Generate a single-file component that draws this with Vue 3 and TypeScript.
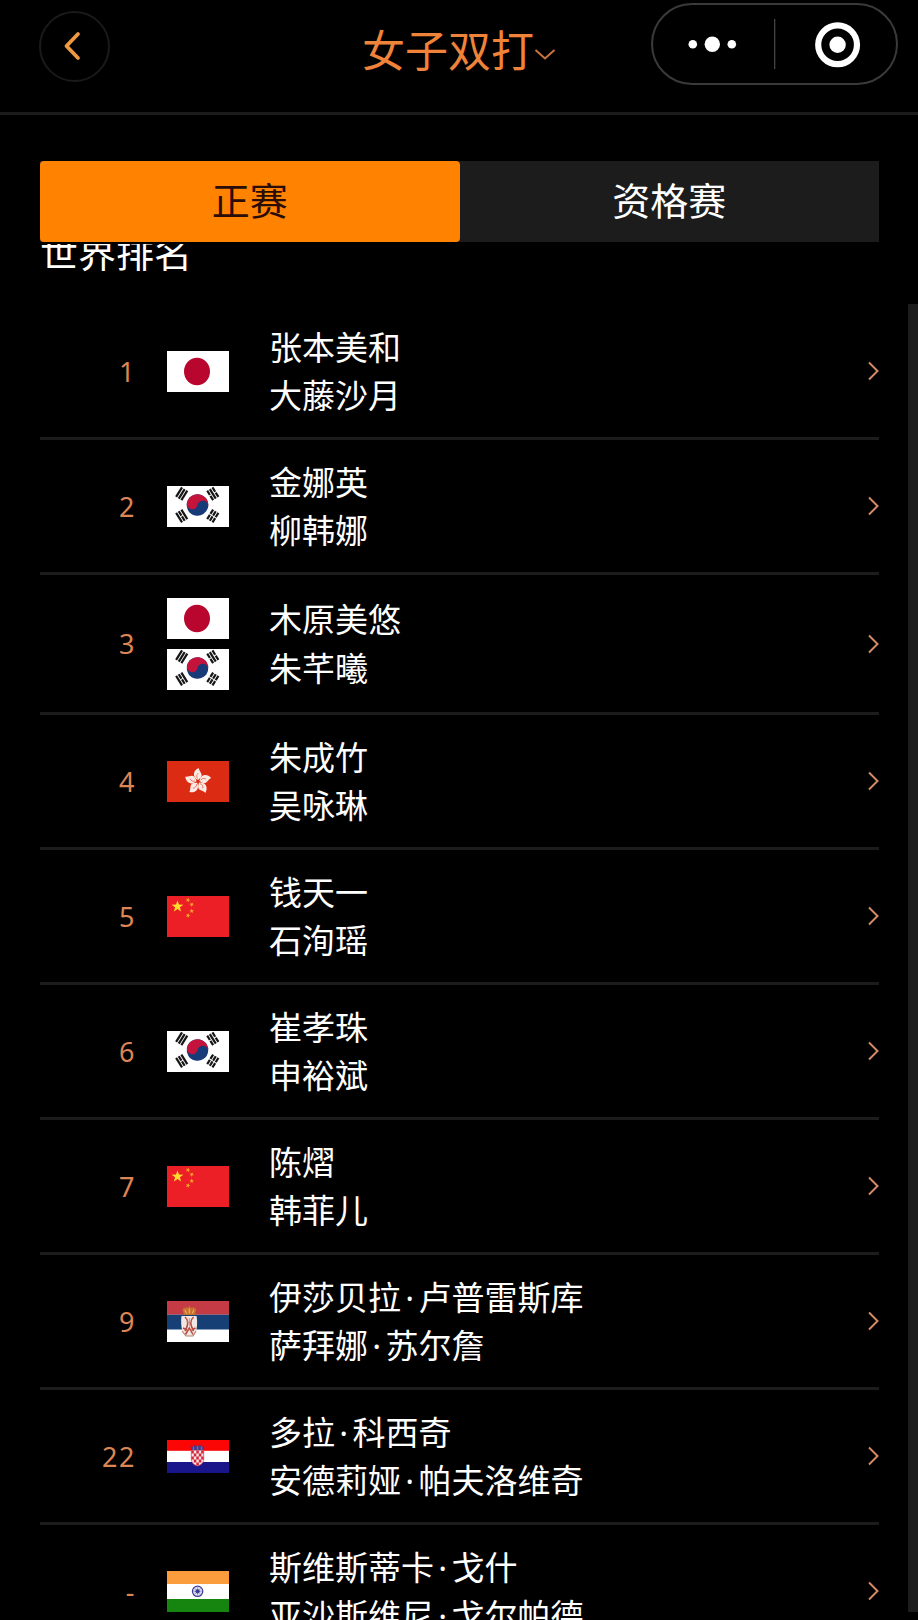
<script setup lang="ts">
type FlagCode = 'jp' | 'kr' | 'hk' | 'cn' | 'rs' | 'hr' | 'in'

interface Pair {
  rank: string
  flags: FlagCode[]
  players: string[]
}

const pairs: Pair[] = [
  { rank: '1', flags: ['jp'], players: ['张本美和', '大藤沙月'] },
  { rank: '2', flags: ['kr'], players: ['金娜英', '柳韩娜'] },
  { rank: '3', flags: ['jp', 'kr'], players: ['木原美悠', '朱芊曦'] },
  { rank: '4', flags: ['hk'], players: ['朱成竹', '吴咏琳'] },
  { rank: '5', flags: ['cn'], players: ['钱天一', '石洵瑶'] },
  { rank: '6', flags: ['kr'], players: ['崔孝珠', '申裕斌'] },
  { rank: '7', flags: ['cn'], players: ['陈熠', '韩菲儿'] },
  { rank: '9', flags: ['rs'], players: ['伊莎贝拉·卢普雷斯库', '萨拜娜·苏尔詹'] },
  { rank: '22', flags: ['hr'], players: ['多拉·科西奇', '安德莉娅·帕夫洛维奇'] },
  { rank: '-', flags: ['in'], players: ['斯维斯蒂卡·戈什', '亚沙斯维尼·戈尔帕德'] },
]

const nameParts = (name: string): string[] => name.split(/(·)/)

const star = (cx: number, cy: number, r: number, turn = 0): string =>
  Array.from({ length: 10 }, (_, i) => {
    const radius = i % 2 ? r * 0.4 : r
    const a = ((i * 36 - 90 + turn) * Math.PI) / 180
    return `${(cx + radius * Math.cos(a)).toFixed(2)},${(cy + radius * Math.sin(a)).toFixed(2)}`
  }).join(' ')

const smallStars = [
  star(21, 4, 2.5, 20),
  star(24.7, 8.5, 2.5, 40),
  star(24.7, 15, 2.5, 0),
  star(21, 19.5, 2.5, 20),
]

// Position, rotation and broken bars of the four trigrams
const trigrams = [
  { x: 14.7, y: 7.8, turn: -58, split: [false, false, false] },
  { x: 45.8, y: 7.8, turn: 58, split: [true, false, true] },
  { x: 14.7, y: 30, turn: 58, split: [false, true, false] },
  { x: 45.8, y: 30, turn: -58, split: [true, true, true] },
]
</script>

<template>
  <div class="page">
    <header class="topbar">
      <button class="back" aria-label="返回">
        <svg width="71" height="71" viewBox="0 0 71 71">
          <path d="M39 23 L27.5 35 L39 47" fill="none" stroke="#ef9a40" stroke-width="3.8" stroke-linecap="round" stroke-linejoin="round" />
        </svg>
      </button>
      <div class="title">
        <span>女子双打</span>
        <svg class="caret" width="22" height="13" viewBox="0 0 22 13">
          <path d="M1.5 2 L11 10.5 L20.5 2" fill="none" stroke="#c9743c" stroke-width="2" />
        </svg>
      </div>
      <div class="capsule">
        <svg width="247" height="82" viewBox="0 0 247 82">
          <rect x="1" y="1" width="245" height="80" rx="40" fill="none" stroke="#3a3a3a" stroke-width="2" />
          <g fill="#fff">
            <circle cx="41.8" cy="41.3" r="4.3" />
            <circle cx="61.3" cy="41.3" r="7.7" />
            <circle cx="80.8" cy="41.3" r="4.3" />
            <circle cx="186.6" cy="41.8" r="8.2" />
          </g>
          <rect x="123" y="16" width="1.3" height="50" fill="#444" />
          <circle cx="186.6" cy="41.8" r="19.4" fill="none" stroke="#fff" stroke-width="6.2" />
        </svg>
      </div>
    </header>

    <nav class="tabs">
      <div class="tab active"><span>正赛</span></div>
      <div class="tab"><span>资格赛</span></div>
    </nav>

    <main class="content">
      <h2 class="heading"><span>世界排名</span></h2>
      <ul class="list">
        <li v-for="pair in pairs" :key="pair.rank" class="row">
          <span class="rank">{{ pair.rank }}</span>
          <div class="flags">
            <template v-for="code in pair.flags" :key="code">
              <svg v-if="code === 'jp'" class="flag" viewBox="0 0 62 41">
                <rect width="62" height="41" fill="#fff" />
                <ellipse cx="30" cy="20.5" rx="13" ry="13.8" fill="#b8062f" />
              </svg>

              <svg v-else-if="code === 'kr'" class="flag" viewBox="0 0 62 41">
                <rect width="62" height="41" fill="#fff" />
                <g transform="translate(30.5 19) rotate(12)">
                  <circle r="10.8" fill="#173a78" />
                  <path d="M-10.8 0 A10.8 10.8 0 0 1 10.8 0 A5.4 5.4 0 0 0 0 0 A5.4 5.4 0 0 1 -10.8 0 Z" fill="#c4143c" />
                </g>
                <g v-for="(t, i) in trigrams" :key="i" :transform="`translate(${t.x} ${t.y}) rotate(${t.turn})`" stroke="#161616" stroke-width="2.2">
                  <path
                    v-for="(broken, n) in t.split"
                    :key="n"
                    :d="broken ? `M-5.6 ${(n - 1) * 3.1} H-0.5 M0.5 ${(n - 1) * 3.1} H5.6` : `M-5.6 ${(n - 1) * 3.1} H5.6`"
                  />
                </g>
              </svg>

              <svg v-else-if="code === 'hk'" class="flag" viewBox="0 0 62 41">
                <rect width="62" height="41" fill="#db2b12" />
                <g transform="translate(31 20.5)">
                  <g v-for="n in 5" :key="n" :transform="`rotate(${n * 72})`">
                    <path d="M0 -1.5 C-6.4 -5 -4.6 -11.5 0.8 -13.6 C0.6 -11 4.8 -8 3.4 -5 C2.4 -3.2 1 -2.5 0 -1.5 Z" fill="#fbe9e3" />
                    <path d="M-0.4 -3 C-2 -5 -1.3 -7 0.2 -8.4" fill="none" stroke="#e06a55" stroke-width="0.8" />
                  </g>
                </g>
              </svg>

              <svg v-else-if="code === 'cn'" class="flag" viewBox="0 0 62 41">
                <rect width="62" height="41" fill="#ec1f27" />
                <polygon :points="star(10.5, 10.6, 6.2)" fill="#ffdd2e" />
                <polygon v-for="points in smallStars" :key="points" :points="points" fill="#f9a52c" />
              </svg>

              <svg v-else-if="code === 'rs'" class="flag" viewBox="0 0 62 41">
                <rect width="62" height="41" fill="#fff" />
                <rect width="62" height="13.7" fill="#c43a45" />
                <rect y="13.7" width="62" height="14.8" fill="#153f75" />
                <path d="M14.5 15 H29.5 C30.5 20 30.2 27 28.8 31 L26.5 35 H18 L15.6 31 C14 26 13.8 20 14.5 15 Z" fill="#f1e7e2" />
                <path d="M17 14 L15.5 8.5 C17 6.5 19 6 21 7 L22.3 4.5 L23.6 7 C26 6 28 6.5 29.3 8.5 L27.8 14 Z" fill="#c9722f" />
                <path d="M18 9 L19.5 12.5 M22.3 7.5 V12.5 M26.8 9 L25.3 12.5" stroke="#ecc06c" stroke-width="1" />
                <path d="M18 16 C21.5 19 21.5 24 18 30 M26.6 16 C23 19 23 24 26.6 30 M18.5 33.5 L22.3 27 L26 33.5 M16 27 L20 29 M28.6 27 L24.6 29" fill="none" stroke="#bb4b40" stroke-width="1.5" />
                <path d="M22.3 17 V25 M19.5 21 H25" stroke="#c9887f" stroke-width="0.9" />
                <path d="M15 30 L19 35 H26 L29 30" fill="none" stroke="#b88273" stroke-width="1.2" />
              </svg>

              <svg v-else-if="code === 'hr'" class="flag flag-wide" viewBox="0 0 62 33">
                <rect width="62" height="33" fill="#fff" />
                <rect width="62" height="10.8" fill="#fb0505" />
                <rect y="22" width="62" height="11" fill="#19158b" />
                <path d="M24.5 10.5 L23.5 6 L26.7 7 L28 4.5 L30.5 6.5 L33 4.5 L34.5 7 L37.5 6 L36.5 10.5 Z" fill="#3b3f92" />
                <path d="M26.5 6.8 V10 M30.5 6 V10 M34.5 6.8 V10" stroke="#d04a6a" stroke-width="1.3" />
                <path d="M24.3 10.5 H36.7 V19 C36.7 23 33.5 25.3 30.5 25.8 C27.5 25.3 24.3 23 24.3 19 Z" fill="#f6e4e6" />
                <path
                  d="M24.3 10.5 h2.5 v3 h-2.5 Z M29.3 10.5 h2.5 v3 h-2.5 Z M34.2 10.5 h2.5 v3 h-2.5 Z M26.8 13.5 h2.5 v3 h-2.5 Z M31.8 13.5 h2.5 v3 h-2.5 Z M24.3 16.5 h2.5 v3 h-2.5 Z M29.3 16.5 h2.5 v3 h-2.5 Z M34.2 16.5 h2.5 v3 h-2.5 Z M26.8 19.5 h2.5 v3 h-2.5 Z M31.8 19.5 h2.5 v3 h-2.5 Z M29.3 22.5 h2.5 v2.8 h-2.5 Z"
                  fill="#d8233a"
                />
                <path d="M24.3 10.5 V19 C24.3 23 27.5 25.3 30.5 25.8 C33.5 25.3 36.7 23 36.7 19 V10.5" fill="none" stroke="#d84a5c" stroke-width="0.8" />
              </svg>

              <svg v-else class="flag" viewBox="0 0 62 41">
                <rect width="62" height="41" fill="#fff" />
                <rect width="62" height="13" fill="#fb9d3d" />
                <rect y="28" width="62" height="13" fill="#16850f" />
                <circle cx="30.6" cy="20.3" r="5.2" fill="#dcdcf2" stroke="#3a3a8e" stroke-width="1.2" />
                <path d="M30.6 15.5 V25 M25.9 20.3 H35.3 M27.3 17 L33.9 23.6 M33.9 17 L27.3 23.6" stroke="#8080bd" stroke-width="0.6" />
                <circle cx="30.6" cy="20.3" r="2.1" fill="#3a3a8e" />
              </svg>
            </template>
          </div>
          <div class="names">
            <div v-for="name in pair.players" :key="name" class="name">
              <template v-for="(part, i) in nameParts(name)" :key="i"><span v-if="part === '·'" class="dot">·</span><template v-else>{{ part }}</template></template>
            </div>
          </div>
          <svg class="arrow" width="12" height="20" viewBox="0 0 12 20">
            <path d="M2 1.5 L10.5 10 L2 18.5" fill="none" stroke="#d58a66" stroke-width="2" />
          </svg>
        </li>
      </ul>
      <div class="scrollbar"></div>
    </main>
  </div>
</template>

<style>
html,
body {
  background: #000;
}
</style>

<style scoped>
.page {
  box-sizing: border-box;
  display: flex;
  flex-direction: column;
  width: 918px;
  height: 1620px;
  overflow: hidden;
  background: #000;
  color: #fff;
  font-family: 'Noto Sans CJK SC', sans-serif;
}

.topbar {
  box-sizing: border-box;
  display: grid;
  grid-template-columns: 1fr auto 1fr;
  flex: none;
  height: 115px;
  padding: 0 20px 0 39px;
  border-bottom: 3px solid #1c1c1c;
}

.back {
  box-sizing: border-box;
  width: 71px;
  height: 71px;
  margin-top: 11px;
  padding: 0;
  border: 2px solid #1a1a1a;
  border-radius: 50%;
  background: none;
}

.back svg {
  display: block;
  margin: -2px;
}

.title {
  display: flex;
  align-items: center;
  height: 96px;
  margin-right: 19px;
  color: #f0833a;
  font-size: 43px;
  line-height: 60px;
}

.caret {
  margin-top: 12px;
}

.capsule {
  justify-self: end;
  height: 82px;
  margin-top: 3px;
}

.capsule svg {
  display: block;
}

.tabs {
  display: flex;
  flex: none;
  height: 81px;
  margin: 46px 39px 0 40px;
  background: #1c1c1c;
}

.tab {
  flex: 1;
  font-size: 38px;
  line-height: 75px;
  text-align: center;
}

.tab.active {
  border-radius: 4px;
  background: #ff8200;
  color: #2a0c08;
}

.content {
  position: relative;
  flex: 1;
  min-height: 0;
  margin-top: 2px;
  padding: 0 39px 0 40px;
  overflow: hidden;
}

.heading {
  display: flex;
  align-items: flex-start;
  height: 61px;
  margin: 0;
  overflow: hidden;
  font-size: 38px;
  font-weight: 400;
  line-height: 56px;
}

.heading span {
  margin-top: -21px;
}

.list {
  margin: 0;
  padding: 0;
  list-style: none;
}

.row {
  box-sizing: border-box;
  display: flex;
  align-items: center;
  min-height: 135px;
  padding: 22.5px 0;
  border-bottom: 3px solid #1c1c1c;
}

.rank {
  width: 96px;
  margin-top: 1px;
  color: #dd8555;
  font-family: 'Noto Sans', sans-serif;
  font-size: 27px;
  letter-spacing: 1.5px;
  line-height: 32px;
  text-align: right;
}

.flags {
  display: flex;
  flex-direction: column;
  gap: 10px;
  width: 62px;
  margin: 0 40px 0 31px;
}

.flag {
  display: block;
  width: 62px;
  height: 41px;
}

.flag-wide {
  height: 33px;
}

.names {
  flex: 1;
  margin: -11px 0 -9px;
  font-size: 33px;
  line-height: 48.5px;
  white-space: nowrap;
}

.dot {
  display: inline-block;
  width: 17.6px;
  font-family: 'Noto Sans', sans-serif;
  line-height: 1;
  text-align: center;
}

.arrow {
  flex: none;
}

.scrollbar {
  position: absolute;
  top: 60px;
  right: 0;
  bottom: 8px;
  width: 10px;
  background: #1c1c1c;
}
</style>
